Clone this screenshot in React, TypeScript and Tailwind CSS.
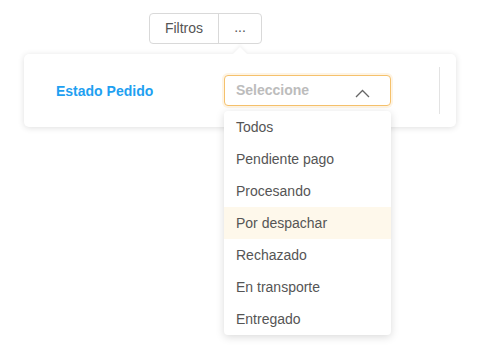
export default function App() {
  const options = [
    "Todos",
    "Pendiente pago",
    "Procesando",
    "Por despachar",
    "Rechazado",
    "En transporte",
    "Entregado",
  ];

  return (
    <div className="w-[483px] h-[348px] bg-white font-['Liberation_Sans',Arial,sans-serif] text-[14px] text-[#555]">
      {/* botones de filtro */}
      <div className="pt-[13px] pl-[149px]">
        <div className="flex w-fit h-[31px] border border-[#d9d9d9] rounded-[4px]">
          <button className="w-[68px] flex items-center justify-center text-[#555]">Filtros</button>
          <button className="w-[43px] flex items-center justify-center border-l border-[#d9d9d9] text-[#555] pb-[3px]">...</button>
        </div>
      </div>

      {/* tarjeta */}
      <div className="relative ml-[24px] mt-[10px] w-[432px] h-[73px] bg-white rounded-[5px] shadow-[0_1px_6px_rgba(0,0,0,0.13)]">
        <div className="absolute -top-[5px] left-[211px] w-[10px] h-[10px] rotate-45 bg-white shadow-[-2px_-2px_3px_rgba(0,0,0,0.04)]" />
        <div className="relative flex items-center h-full pl-[32px]">
          <span className="w-[168px] font-bold text-[#1ea0f1] mt-[1px]">Estado Pedido</span>
          <div className="relative">
            <div className="w-[167px] h-[31px] border border-[#f5c16c] rounded-[4px] shadow-[0_0_0_2px_rgba(247,196,108,0.18)] flex items-center justify-between pl-[11px] pr-[20px] bg-white">
              <span className="font-bold text-[#bcbcbc]">Seleccione</span>
              <svg width="15" height="9" viewBox="0 0 15 9" className="mt-[5px]">
                <path d="M1 8 L7.5 1.5 L14 8" fill="none" stroke="#666" strokeWidth="1.3" />
              </svg>
            </div>
            <div className="absolute top-[36px] left-0 w-[167px] bg-white rounded-[4px] shadow-[0_2px_8px_rgba(0,0,0,0.15)] z-10">
              {options.map((o, i) => (
                <div
                  key={i}
                  className={`h-[32px] flex items-center pl-[12px] ${o === "Por despachar" ? "bg-[#fef8eb]" : ""}`}
                >
                  {o}
                </div>
              ))}
            </div>
          </div>
          <div className="ml-auto mr-[16px] w-px h-[47px] bg-[#e3e3e3]" />
        </div>
      </div>
    </div>
  );
}
